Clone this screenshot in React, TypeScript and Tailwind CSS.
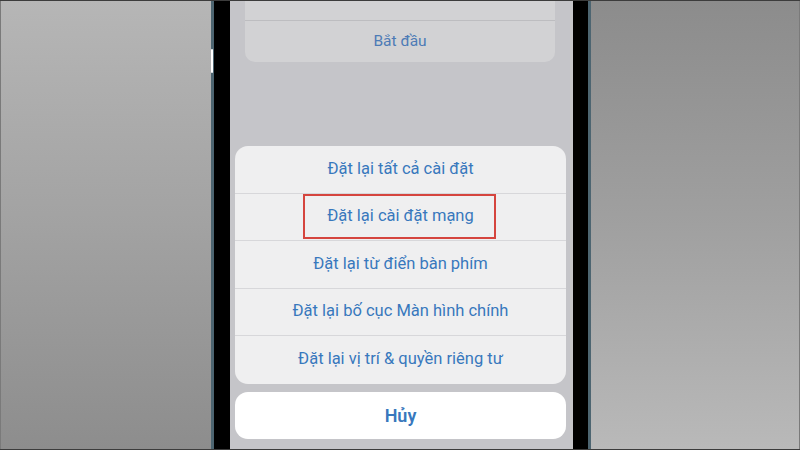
const rows = [
  'Đặt lại tất cả cài đặt',
  'Đặt lại cài đặt mạng',
  'Đặt lại từ điển bàn phím',
  'Đặt lại bố cục Màn hình chính',
  'Đặt lại vị trí & quyền riêng tư',
];

const font = { fontFamily: 'Roboto, "Noto Sans", sans-serif' };

export default function App() {
  return (
    <div
      className="w-[800px] h-[450px] flex border-y border-[#3c3c3c] overflow-hidden"
      style={font}
    >
      {/* backdrop left */}
      <div className="w-[211px] h-full bg-gradient-to-b from-[#b6b6b6] via-[#a2a2a2] to-[#8d8d8d] border-l border-[#7a7a7a]" />

      {/* phone */}
      <div className="relative flex h-full">
        <div className="w-[3px] bg-[#4d6571]" />
        <div className="w-[16px] bg-black" />
        <div className="relative w-[343px] h-full bg-[#c5c5c9] flex flex-col">
          {/* dimmed card behind the sheet */}
          <div className="ml-[15px] mr-[18px] bg-[#d2d2d4] rounded-b-[10px]">
            <div className="h-[20px] border-b border-[#bdbdc0]" />
            <div className="h-[41px] flex items-center justify-center text-[15.5px] text-[#4d7bb6]">
              Bắt đầu
            </div>
          </div>

          {/* action sheet */}
          <div className="mt-[84px] ml-[5px] mr-[7px] flex flex-col gap-[8px]">
            <div className="bg-[#efeff0] rounded-[13px] overflow-hidden">
              {rows.map((label, i) => (
                <div
                  key={label}
                  className={`relative h-[47.5px] flex items-center justify-center text-[16.5px] text-[#3878bd] ${
                    i < rows.length - 1 ? 'border-b border-[#d7d7da]' : ''
                  }`}
                >
                  {label}
                  {i === 1 && (
                    <div className="absolute left-[68px] top-0 w-[193px] h-[45px] border-2 border-[#d5453e]" />
                  )}
                </div>
              ))}
            </div>
            <div className="h-[47px] bg-white rounded-[13px] flex items-center justify-center text-[18px] font-semibold text-[#3878bd]">
              Hủy
            </div>
          </div>
        </div>
        <div className="w-[15px] bg-black" />
        <div className="w-[3px] bg-[#4d6571]" />
        {/* side button */}
        <div className="absolute left-[0px] top-[48px] w-[2px] h-[24px] bg-white rounded-full" />
      </div>

      {/* backdrop right */}
      <div className="flex-1 h-full bg-gradient-to-b from-[#8c8c8c] via-[#a0a0a0] to-[#b9b9b9] border-r border-[#7a7a7a]" />
    </div>
  );
}
